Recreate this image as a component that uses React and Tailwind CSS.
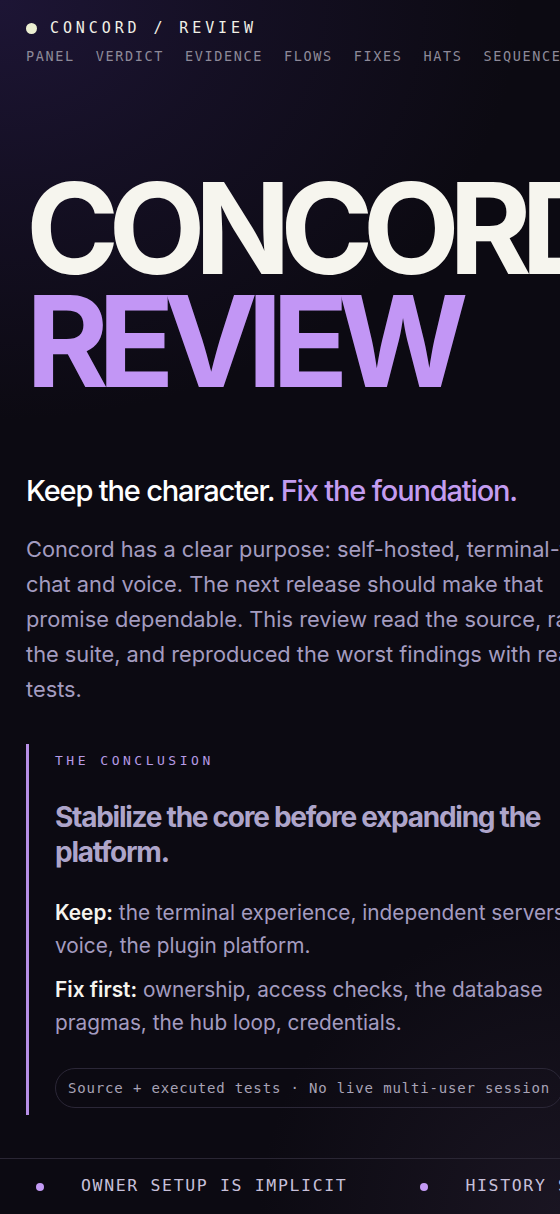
import React from 'react';

const mono = { fontFamily: '"DejaVu Sans Mono", "Liberation Mono", monospace' };
const sans = { fontFamily: 'Inter, "Noto Sans", sans-serif' };

const navLinks = ['Panel', 'Verdict', 'Evidence', 'Flows', 'Fixes', 'Hats', 'Sequence'];
const ticker = ['Owner setup is implicit', 'History store is unbounded', 'Hub loop blocks on slow peers'];

export default function App() {
  return (
    <div
      className="w-[560px] min-h-[1214px] overflow-hidden bg-[#0c0a12] text-[#f4f2ea]"
      style={{
        ...sans,
        backgroundImage:
          'radial-gradient(ellipse 520px 420px at 0% 0%, #1d1535 0%, rgba(29,21,53,0.5) 45%, rgba(12,10,18,0) 100%), radial-gradient(ellipse 300px 300px at 100% 100%, #1a1522 0%, rgba(12,10,18,0) 100%)',
      }}
    >
      <div className="w-[660px] px-[26px]">
        <header className="pt-[17px]">
          <div className="flex items-center gap-[13px]">
            <span className="block h-[11px] w-[11px] rounded-full bg-[#ecefd2]" />
            <span className="text-[15px] leading-[22px] uppercase tracking-[0.26em] text-[#f1f0e6]" style={mono}>
              Concord / Review
            </span>
          </div>
          <nav
            className="mt-[7px] flex gap-[21px] text-[13.5px] leading-[20px] uppercase tracking-[0.12em] text-[#8d8a99]"
            style={mono}
          >
            {navLinks.map((l) => (
              <span key={l}>{l}</span>
            ))}
          </nav>
        </header>

        <h1 className="mt-[106px] font-bold uppercase leading-[113px] tracking-[-0.085em]" style={{ ...sans, fontSize: 126 }}>
          <span className="block text-[#f6f5ee]">Concord</span>
          <span className="block text-[#c296f5]">Review</span>
        </h1>

        <h2 className="mt-[75px] text-[29px] leading-[35px] font-medium tracking-[-0.04em] text-white">
          Keep the character. <span className="text-[#c39cf0]">Fix the foundation.</span>
        </h2>

        <p className="mt-[24px] w-[583px] text-[21.8px] leading-[35px] text-[#a49cc0]">
          Concord has a clear purpose: self-hosted, terminal-first chat and voice. The next release should make that
          promise dependable. This review read the source, ran the suite, and reproduced the worst findings with real
          tests.
        </p>

        <section className="mt-[37px] w-[590px] border-l-[3px] border-[#b78fe6] pl-[26px] pt-[7px] pb-[7px]">
          <div className="text-[13px] leading-[19px] uppercase tracking-[0.27em] text-[#b79be6]" style={mono}>
            The Conclusion
          </div>
          <h3 className="mt-[30px] text-[28px] font-bold leading-[35px] tracking-[-0.045em] text-[#aea5ca]">
            Stabilize the core before expanding the platform.
          </h3>
          <p className="mt-[26px] text-[20.8px] leading-[33px] text-[#a49cc0]">
            <strong className="font-semibold text-[#f6f4ee]">Keep:</strong> the terminal experience, independent servers,
            voice, the plugin platform.
          </p>
          <p className="mt-[11px] text-[20.8px] leading-[33px] text-[#a49cc0]">
            <strong className="font-semibold text-[#f6f4ee]">Fix first:</strong> ownership, access checks, the database
            pragmas, the hub loop, credentials.
          </p>
          <div
            className="mt-[29px] inline-flex h-[40px] items-center whitespace-nowrap rounded-full border border-[#2b2737] px-[12px] text-[14px] tracking-[0.06em] text-[#a8a3b6]"
            style={mono}
          >
            Source + executed tests · No live multi-user session
          </div>
        </section>
      </div>

      <div className="mt-[43px] flex h-[56px] items-center gap-[73px] border-t border-[#2a2634] pl-[36px] whitespace-nowrap">
        {ticker.map((t) => (
          <div key={t} className="flex items-center gap-[37px]">
            <span className="block h-[8px] w-[8px] rounded-full bg-[#c49bf5]" />
            <span className="text-[16.5px] uppercase tracking-[0.1em] text-[#c7c0da]" style={mono}>
              {t}
            </span>
          </div>
        ))}
      </div>
    </div>
  );
}
